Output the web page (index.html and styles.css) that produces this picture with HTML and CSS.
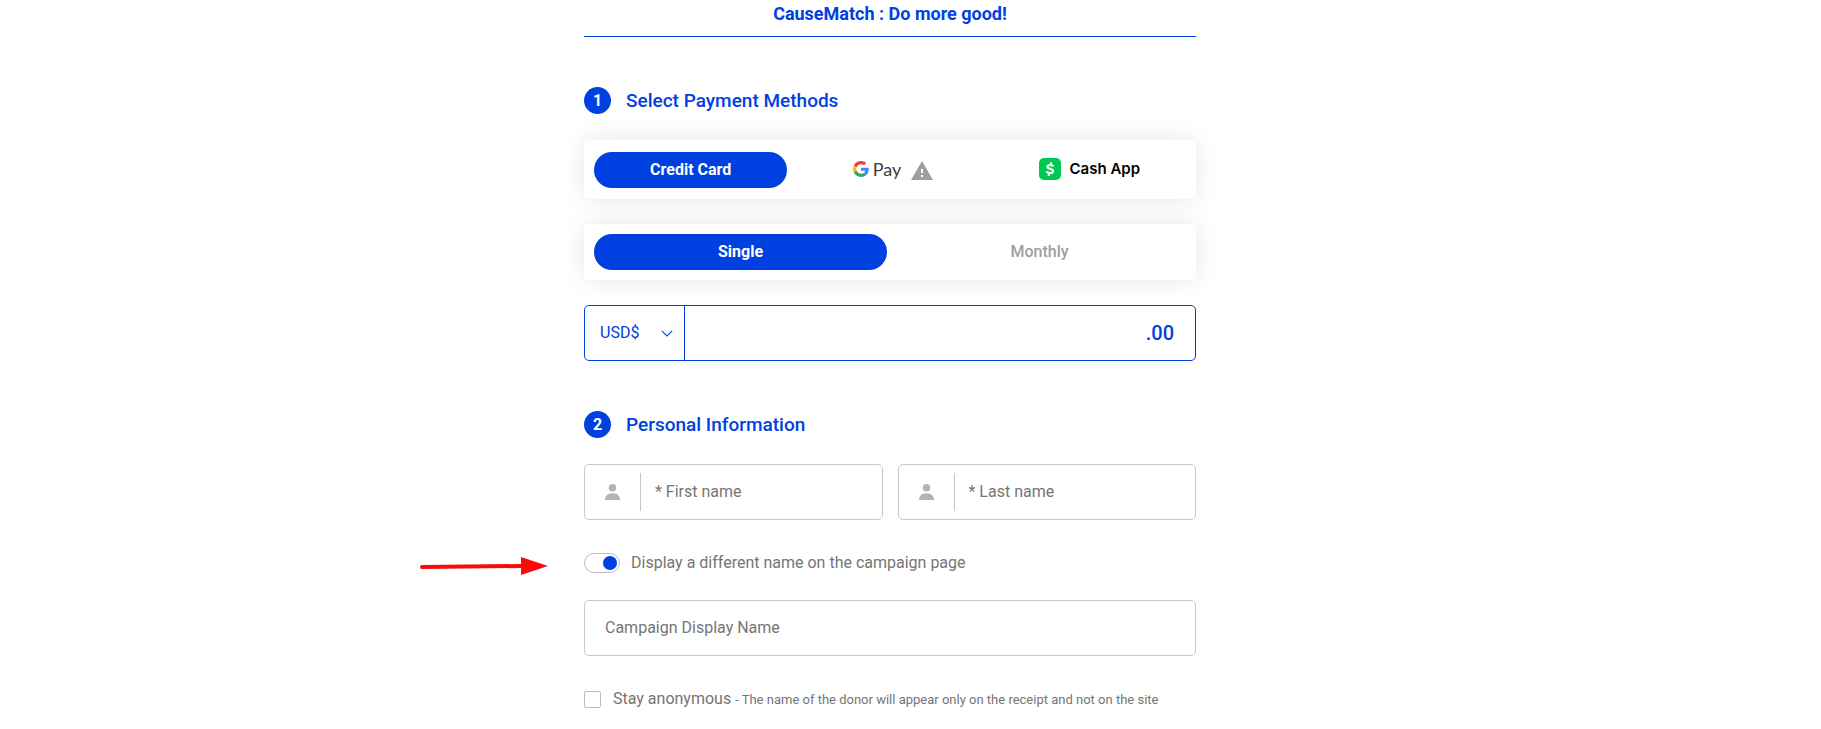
FILE: index.html
```
<!DOCTYPE html>
<html lang="en">
<head>
<meta charset="utf-8">
<title>CauseMatch : Do more good!</title>
<link rel="stylesheet" href="styles.css">
</head>
<body>
<form class="donation">
  <h1 class="title">CauseMatch : Do more good!</h1>

  <section class="section">
    <h2 class="heading"><span class="step">1</span>Select Payment Methods</h2>
    <div class="card methods">
      <button type="button" class="pill active">Credit Card</button>
      <button type="button" class="pill gpay">
        <svg class="google" viewBox="0 0 48 48" aria-hidden="true">
          <path fill="#EA4335" d="M24 9.5c3.54 0 6.71 1.22 9.21 3.6l6.85-6.85C35.9 2.38 30.47 0 24 0 14.62 0 6.51 5.38 2.56 13.22l7.98 6.19C12.43 13.72 17.74 9.5 24 9.5z"/>
          <path fill="#4285F4" d="M46.98 24.55c0-1.57-.15-3.09-.38-4.55H24v9.02h12.94c-.58 2.96-2.26 5.48-4.78 7.18l7.73 6c4.51-4.18 7.09-10.36 7.09-17.65z"/>
          <path fill="#FBBC05" d="M10.53 28.59c-.48-1.45-.76-2.99-.76-4.59s.27-3.14.76-4.59l-7.98-6.19C.92 16.46 0 20.12 0 24s.92 7.54 2.56 10.78l7.97-6.19z"/>
          <path fill="#34A853" d="M24 48c6.48 0 11.93-2.13 15.89-5.81l-7.73-6c-2.15 1.45-4.92 2.3-8.16 2.3-6.26 0-11.57-4.22-13.47-9.91l-7.98 6.19C6.51 42.62 14.62 48 24 48z"/>
        </svg>
        <span class="gpay-name">Pay</span>
        <svg class="warning" viewBox="0 0 22 19" aria-hidden="true">
          <path fill="#9e9e9e" d="M11 0 22 19H0z"/>
          <path fill="#fff" d="M10 8h2v4h-2zM10 14h2v2h-2z"/>
        </svg>
      </button>
      <button type="button" class="pill cashapp">
        <svg class="cash" viewBox="0 0 22 22" aria-hidden="true">
          <rect width="22" height="22" rx="5" fill="#00c853"/>
          <path fill="none" stroke="#fff" stroke-width="2.2" d="M14.600 8.300C12.900 6.600 8.800 6.400 8.500 8.600c-.3 2.600 5.900 1.700 5.500 4.600-.4 2.400-4.700 2.300-6.800.3M12.200 4.400l-.5 2.400M10.100 15.200l-.5 2.600"/>
        </svg>
        <span>Cash App</span>
      </button>
    </div>
    <div class="card frequency">
      <button type="button" class="pill active">Single</button>
      <button type="button" class="pill">Monthly</button>
    </div>
    <div class="amount">
      <div class="currency">
        <select aria-label="Currency"><option>USD$</option></select>
        <svg class="chevron" viewBox="0 0 12 7" aria-hidden="true"><path fill="none" stroke="#0040e0" stroke-width="1.1" d="m.8.8 5.200 5.200L11.200.8"/></svg>
      </div>
      <input class="amount-input" type="text" inputmode="numeric" aria-label="Amount">
      <span class="cents">.00</span>
    </div>
  </section>

  <section class="section">
    <h2 class="heading"><span class="step">2</span>Personal Information</h2>
    <div class="names">
      <label class="field">
        <span class="field-icon"><svg class="person" viewBox="0 0 15 16" aria-hidden="true"><circle cx="7.500" cy="3.800" r="3.800"/><path d="M0 16c0-4 2.500-6.800 7.500-6.800S15 12 15 16z"/></svg></span>
        <input type="text" placeholder="* First name" aria-label="First name">
      </label>
      <label class="field">
        <span class="field-icon"><svg class="person" viewBox="0 0 15 16" aria-hidden="true"><circle cx="7.500" cy="3.800" r="3.800"/><path d="M0 16c0-4 2.500-6.800 7.500-6.800S15 12 15 16z"/></svg></span>
        <input type="text" placeholder="* Last name" aria-label="Last name">
      </label>
    </div>
    <div class="toggle-row">
      <svg class="arrow" viewBox="0 0 128 18" aria-hidden="true">
        <path fill="none" stroke="#fa0a0a" stroke-width="4" stroke-linecap="round" d="M2 10 102 9"/>
        <path fill="#fa0a0a" d="M101 0 128 9 101 18z"/>
      </svg>
      <label class="option">
        <input class="switch" type="checkbox" role="switch" checked>
        <span>Display a different name on the campaign page</span>
      </label>
    </div>
    <input class="display-name" type="text" placeholder="Campaign Display Name" aria-label="Campaign Display Name">
    <label class="option anonymous">
      <input class="check" type="checkbox">
      <span>Stay anonymous <small>- The name of the donor will appear only on the receipt and not on the site</small></span>
    </label>
  </section>
</form>
</body>
</html>
```
FILE: styles.css
```
* { box-sizing: border-box; }

body {
  margin: 0;
  padding: 0 41px 20px 0;
  background: #fff;
  color: #757575;
  font: 16px/20px Roboto, "Liberation Sans", sans-serif;
}

input, select, button { font: inherit; color: inherit; }

.donation {
  width: 100%;
  max-width: 612px;
  margin: 0 auto;
}

.title {
  margin: 0;
  padding: 4px 0 12px;
  border-bottom: 1px solid #0040e0;
  color: #0040e0;
  font-size: 18px;
  font-weight: 700;
  text-align: center;
}

.section { padding-top: 50px; }

.heading {
  display: flex;
  align-items: center;
  gap: 15px;
  margin: 0 0 26px;
  color: #0040e0;
  font-size: 19px;
  font-weight: 500;
  line-height: 27px;
}

.step {
  width: 27px;
  height: 27px;
  border-radius: 50%;
  background: #0040e0;
  color: #fff;
  font-size: 16px;
  font-weight: 700;
  text-align: center;
}

.card {
  display: grid;
  gap: 6px;
  margin-bottom: 25px;
  padding: 10px;
  border-radius: 5px;
  background: #fff;
  box-shadow: 0 0 25px rgba(0, 0, 0, 0.1);
}

.methods {
  grid-template-columns: repeat(3, 1fr);
  padding: 12px 10px 11px;
}

.frequency {
  position: relative;
  grid-template-columns: repeat(2, 1fr);
}

.pill {
  display: flex;
  align-items: center;
  justify-content: center;
  height: 36px;
  padding: 0;
  border: 0;
  border-radius: 18px;
  background: none;
  color: #9e9e9e;
  font-weight: 500;
}

.active {
  background: #0040e0;
  color: #fff;
  font-weight: 700;
}

.gpay { padding: 0 0 3px 6px; }

.google { width: 16px; height: 16px; margin-right: 4px; }

.gpay-name {
  color: #3c4043;
  font: 18px/24px Lato, sans-serif;
}

.warning { width: 22px; height: 19px; margin: 4px 0 0 10px; }

.cashapp {
  gap: 9px;
  padding-bottom: 2px;
  color: #000;
  font: 600 15px/20px Inter, sans-serif;
}

.cash { width: 22px; height: 22px; }

.amount {
  display: flex;
  align-items: center;
  height: 56px;
  border: 1px solid #0040e0;
  border-radius: 5px;
  color: #0040e0;
}

.currency {
  display: grid;
  align-items: center;
  width: 100px;
  height: 100%;
  border-right: 1px solid #0040e0;
}

.currency select, .chevron { grid-area: 1 / 1; }

.currency select {
  height: 100%;
  padding: 0 30px 0 15px;
  border: 0;
  background: none;
  appearance: none;
}

.chevron {
  width: 12px;
  height: 7px;
  margin-right: 11px;
  justify-self: end;
  pointer-events: none;
}

.amount-input {
  flex: 1;
  min-width: 0;
  height: 100%;
  padding: 0 10px;
  border: 0;
  background: none;
  text-align: right;
}

.cents {
  padding-right: 21px;
  font-size: 20px;
  font-weight: 500;
}

.names {
  display: grid;
  grid-template-columns: repeat(2, 1fr);
  gap: 15px;
}

.field {
  display: flex;
  align-items: center;
  height: 56px;
  border: 1px solid #c8c8c8;
  border-radius: 5px;
}

.field-icon {
  display: flex;
  align-items: center;
  justify-content: center;
  width: 56px;
  height: 38px;
  border-right: 1px solid #c8c8c8;
}

.person { width: 15px; height: 16px; fill: #b3b3b3; }

.field input {
  flex: 1;
  min-width: 0;
  height: 100%;
  padding: 0 14px 2px;
  border: 0;
  background: none;
}

::placeholder { color: #757575; opacity: 1; }

.toggle-row {
  position: relative;
  margin: 33px 0 27px;
}

.arrow {
  position: absolute;
  top: 4px;
  right: calc(100% + 36px);
  width: 128px;
  height: 18px;
}

.option {
  display: flex;
  align-items: center;
  gap: 11px;
}

.switch {
  display: flex;
  align-items: center;
  justify-content: flex-end;
  width: 36px;
  height: 20px;
  margin: 0;
  padding: 0 2px;
  border: 1px solid #bdbdbd;
  border-radius: 10px;
  background: #fff;
  appearance: none;
}

.switch::before {
  width: 14px;
  height: 14px;
  border-radius: 50%;
  background: #0040e0;
  content: "";
}

.switch:not(:checked) { justify-content: flex-start; }

.display-name {
  display: block;
  width: 100%;
  height: 56px;
  padding: 0 20px 2px;
  border: 1px solid #c8c8c8;
  border-radius: 5px;
}

.anonymous { gap: 12px; margin-top: 33px; }

.check {
  flex: none;
  width: 17px;
  height: 17px;
  margin: 0;
  border: 1px solid #bdbdbd;
  border-radius: 2px;
  background: #fff;
  appearance: none;
}

.check:checked { background: #0040e0; }

small { font-size: 13px; }
```
